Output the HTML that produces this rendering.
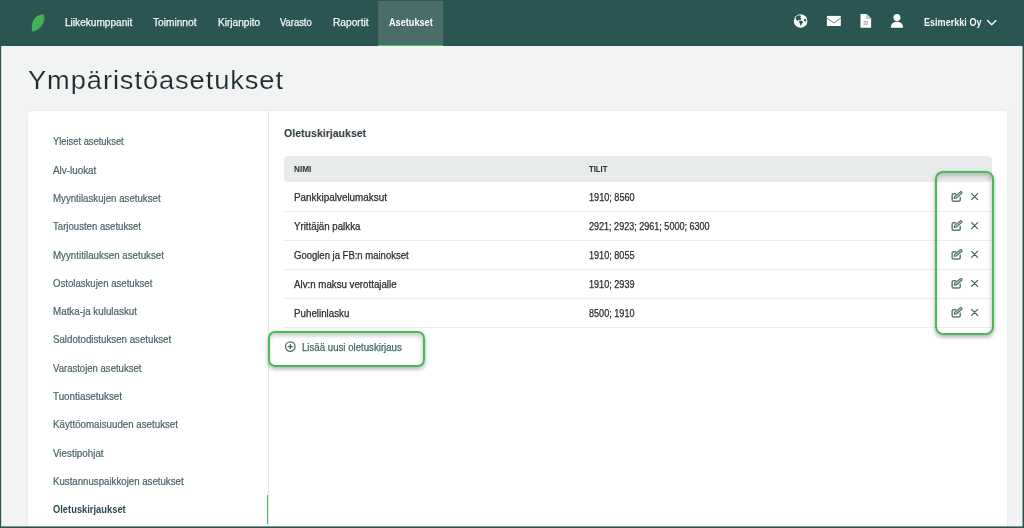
<!DOCTYPE html>
<html><head><meta charset="utf-8">
<style>
html,body{margin:0;padding:0;}
body{width:1024px;height:528px;overflow:hidden;position:relative;background:#f2f4f4;font-family:"Liberation Sans",sans-serif;}
.t{position:absolute;white-space:nowrap;font-family:"Liberation Sans",sans-serif;}
.a{position:absolute;}
</style></head><body>
<!-- nav -->
<div class="a" style="left:0;top:0;width:1024px;height:46px;background:#2a5553"></div>
<div class="a" style="left:378px;top:1px;width:65px;height:44px;background:#4a6d6a"></div>
<div class="a" style="left:378px;top:44.5px;width:65px;height:1.7px;background:#46c35a"></div>
<svg class="a" style="left:0;top:0" width="1024" height="46" viewBox="0 0 1024 46">
  <defs><filter id="bl" x="-50%" y="-50%" width="200%" height="200%"><feGaussianBlur stdDeviation="0.6"/></filter></defs>
  <path d="M33.6,32.1 C32.6,25 35.2,16.5 44.4,14.3 C45.9,20.5 43.4,28.5 33.6,32.1 Z" fill="#6b8081" opacity="0.75" filter="url(#bl)"/>
  <path d="M32.2,31.7 C30.6,23.5 33,15.6 43,13.9 C45.2,20 42.2,28.3 32.2,31.7 Z" fill="#41b553"/>
  <!-- globe -->
  <circle cx="800.6" cy="21" r="6.85" fill="#ffffff"/>
  <path d="M795.6,17.4 C796.6,15.6 798.6,14.9 800.2,15.2 L801.2,16.6 L800,17.5 L801.5,18.6 L800.2,20.6 L798.8,19.8 L797.5,20.9 L796,19.6 Z" fill="#2a5553"/>
  <path d="M798.8,20.9 L801.6,20.8 L803.2,22 L801.9,23.8 L800.6,26.2 L800.1,24.3 Z" fill="#2a5553"/>
  <path d="M804.3,18.4 L806,19.2 L806.5,21.4 L805,21.6 L804,20.2 Z" fill="#2a5553"/>
  <!-- envelope -->
  <rect x="826.9" y="15.9" width="13.9" height="10.1" fill="#ffffff"/>
  <path d="M826.9,18.2 L833.85,22.9 L840.8,18.2" fill="none" stroke="#4d6e6c" stroke-width="0.9"/>
  <!-- doc -->
  <path d="M860.5,14.1 H866.7 L871.1,18.5 V27.8 H860.5 Z" fill="#ffffff"/>
  <path d="M866.7,14.1 V18.5 H871.1" fill="#cfd8d8" stroke="#8aa0a0" stroke-width="0.5"/>
  <rect x="863.5" y="21.2" width="4.6" height="1.1" fill="#8e9f9f"/>
  <rect x="863.5" y="23.5" width="4.6" height="1.1" fill="#8e9f9f"/>
  <!-- user -->
  <circle cx="896.9" cy="17.5" r="3.5" fill="#ffffff"/>
  <path d="M890.8,27.8 C890.8,24 893,21.8 896.9,21.8 C900.8,21.8 903.1,24 903.1,27.8 Z" fill="#ffffff"/>
  <!-- chevron -->
  <path d="M987.5,20.5 L991.7,24.7 L995.9,20.5" fill="none" stroke="#ffffff" stroke-width="1.3" stroke-linecap="round" stroke-linejoin="round"/>
</svg>

<!-- card -->
<div class="a" style="left:28px;top:110.8px;width:979px;height:430px;background:#ffffff;border-radius:3px;box-shadow:0 0 4px rgba(0,0,0,0.06)"></div>
<div class="a" style="left:268px;top:110.8px;width:1px;height:420px;background:#e3e7e7"></div>
<div class="a" style="left:266.8px;top:495px;width:1.6px;height:28.5px;background:#48be58"></div>

<!-- table header -->
<div class="a" style="left:284px;top:156px;width:707.5px;height:25.8px;background:#e8ebeb;border-radius:4px"></div>
<!-- row dividers -->
<div class="a" style="left:284px;top:210.8px;width:707.5px;height:1px;background:#eceeee"></div>
<div class="a" style="left:284px;top:240px;width:707.5px;height:1px;background:#eceeee"></div>
<div class="a" style="left:284px;top:268.8px;width:707.5px;height:1px;background:#eceeee"></div>
<div class="a" style="left:284px;top:297.8px;width:707.5px;height:1px;background:#eceeee"></div>
<div class="a" style="left:284px;top:327px;width:707.5px;height:1px;background:#eceeee"></div>

<!-- icons in rows -->
<svg class="a" style="left:0;top:0" width="1024" height="528" viewBox="0 0 1024 528">
  <g transform="translate(951,191.2)"><path d="M4.6,2.65 H2.6 Q1.15,2.65 1.15,4.1 V8.6 Q1.15,10.05 2.6,10.05 H7.8 Q9.25,10.05 9.25,8.6 V6.2" fill="none" stroke="#5c7d7b" stroke-width="1.5" stroke-linecap="round"/>
      <path d="M3.1,7.3 L3.7,5.1 L9.4,0.6 Q10.1,0.15 10.7,0.85 L10.95,1.15 Q11.3,1.75 10.8,2.25 L5.3,7.0 Z" fill="#b3c4c3" stroke="#4d6e6c" stroke-width="1.05" stroke-linejoin="round"/></g>
  <g transform="translate(971.1,193.1)"><path d="M0.5,0.5 L6.5,6.5 M6.5,0.5 L0.5,6.5" fill="none" stroke="#3d6361" stroke-width="1.2" stroke-linecap="round"/></g>
  <g transform="translate(951,220.2)"><path d="M4.6,2.65 H2.6 Q1.15,2.65 1.15,4.1 V8.6 Q1.15,10.05 2.6,10.05 H7.8 Q9.25,10.05 9.25,8.6 V6.2" fill="none" stroke="#5c7d7b" stroke-width="1.5" stroke-linecap="round"/>
      <path d="M3.1,7.3 L3.7,5.1 L9.4,0.6 Q10.1,0.15 10.7,0.85 L10.95,1.15 Q11.3,1.75 10.8,2.25 L5.3,7.0 Z" fill="#b3c4c3" stroke="#4d6e6c" stroke-width="1.05" stroke-linejoin="round"/></g>
  <g transform="translate(971.1,222.1)"><path d="M0.5,0.5 L6.5,6.5 M6.5,0.5 L0.5,6.5" fill="none" stroke="#3d6361" stroke-width="1.2" stroke-linecap="round"/></g>
  <g transform="translate(951,249)"><path d="M4.6,2.65 H2.6 Q1.15,2.65 1.15,4.1 V8.6 Q1.15,10.05 2.6,10.05 H7.8 Q9.25,10.05 9.25,8.6 V6.2" fill="none" stroke="#5c7d7b" stroke-width="1.5" stroke-linecap="round"/>
      <path d="M3.1,7.3 L3.7,5.1 L9.4,0.6 Q10.1,0.15 10.7,0.85 L10.95,1.15 Q11.3,1.75 10.8,2.25 L5.3,7.0 Z" fill="#b3c4c3" stroke="#4d6e6c" stroke-width="1.05" stroke-linejoin="round"/></g>
  <g transform="translate(971.1,250.9)"><path d="M0.5,0.5 L6.5,6.5 M6.5,0.5 L0.5,6.5" fill="none" stroke="#3d6361" stroke-width="1.2" stroke-linecap="round"/></g>
  <g transform="translate(951,278)"><path d="M4.6,2.65 H2.6 Q1.15,2.65 1.15,4.1 V8.6 Q1.15,10.05 2.6,10.05 H7.8 Q9.25,10.05 9.25,8.6 V6.2" fill="none" stroke="#5c7d7b" stroke-width="1.5" stroke-linecap="round"/>
      <path d="M3.1,7.3 L3.7,5.1 L9.4,0.6 Q10.1,0.15 10.7,0.85 L10.95,1.15 Q11.3,1.75 10.8,2.25 L5.3,7.0 Z" fill="#b3c4c3" stroke="#4d6e6c" stroke-width="1.05" stroke-linejoin="round"/></g>
  <g transform="translate(971.1,279.9)"><path d="M0.5,0.5 L6.5,6.5 M6.5,0.5 L0.5,6.5" fill="none" stroke="#3d6361" stroke-width="1.2" stroke-linecap="round"/></g>
  <g transform="translate(951,307)"><path d="M4.6,2.65 H2.6 Q1.15,2.65 1.15,4.1 V8.6 Q1.15,10.05 2.6,10.05 H7.8 Q9.25,10.05 9.25,8.6 V6.2" fill="none" stroke="#5c7d7b" stroke-width="1.5" stroke-linecap="round"/>
      <path d="M3.1,7.3 L3.7,5.1 L9.4,0.6 Q10.1,0.15 10.7,0.85 L10.95,1.15 Q11.3,1.75 10.8,2.25 L5.3,7.0 Z" fill="#b3c4c3" stroke="#4d6e6c" stroke-width="1.05" stroke-linejoin="round"/></g>
  <g transform="translate(971.1,308.9)"><path d="M0.5,0.5 L6.5,6.5 M6.5,0.5 L0.5,6.5" fill="none" stroke="#3d6361" stroke-width="1.2" stroke-linecap="round"/></g>
  <!-- plus circle -->
  <circle cx="290.3" cy="346.6" r="4.75" fill="none" stroke="#4d6e6c" stroke-width="1.3"/>
  <path d="M290.3,344.6 V348.6 M288.3,346.6 H292.3" stroke="#3f6260" stroke-width="1.3" stroke-linecap="round"/>
</svg>

<!-- green highlight boxes -->
<div class="a" style="left:935.2px;top:171.2px;width:58.7px;height:163.5px;box-sizing:border-box;border:2px solid #47b955;border-radius:8px;box-shadow:0 2px 4px rgba(0,0,0,0.32), inset -1px 3px 4px rgba(0,0,0,0.2)"></div>
<div class="a" style="left:268.1px;top:331.4px;width:156.9px;height:35.4px;box-sizing:border-box;border:2px solid #47b955;border-radius:7px;box-shadow:0 2px 4px rgba(0,0,0,0.32), inset -1px 3px 4px rgba(0,0,0,0.2)"></div>

<div class="t" style="left:64.5px;top:18.43px;font-size:10px;line-height:10px;font-weight:400;color:#f4f7f6;letter-spacing:0.000px;-webkit-text-stroke:0.25px #f4f7f6;transform:scaleX(1.0102107728337237);transform-origin:0 0;">Liikekumppanit</div>
<div class="t" style="left:152.8px;top:18.43px;font-size:10px;line-height:10px;font-weight:400;color:#f4f7f6;letter-spacing:0.000px;-webkit-text-stroke:0.25px #f4f7f6;transform:scaleX(1.0160583941605839);transform-origin:0 0;">Toiminnot</div>
<div class="t" style="left:217.6px;top:18.43px;font-size:10px;line-height:10px;font-weight:400;color:#f4f7f6;letter-spacing:0.000px;-webkit-text-stroke:0.25px #f4f7f6;transform:scaleX(1.0119145747470963);transform-origin:0 0;">Kirjanpito</div>
<div class="t" style="left:280.3px;top:18.43px;font-size:10px;line-height:10px;font-weight:400;color:#f4f7f6;letter-spacing:0.000px;-webkit-text-stroke:0.25px #f4f7f6;transform:scaleX(0.9396943029180176);transform-origin:0 0;">Varasto</div>
<div class="t" style="left:333.0px;top:18.43px;font-size:10px;line-height:10px;font-weight:400;color:#f4f7f6;letter-spacing:0.000px;-webkit-text-stroke:0.25px #f4f7f6;transform:scaleX(1.0166889781347612);transform-origin:0 0;">Raportit</div>
<div class="t" style="left:388.9px;top:18.43px;font-size:10px;line-height:10px;font-weight:700;color:#ffffff;letter-spacing:0.000px;transform:scaleX(0.9139869281045753);transform-origin:0 0;">Asetukset</div>
<div class="t" style="left:923.5px;top:18.43px;font-size:10px;line-height:10px;font-weight:700;color:#f4f7f6;letter-spacing:0.000px;transform:scaleX(0.9072978303747534);transform-origin:0 0;">Esimerkki Oy</div>
<div class="t" style="left:28.0px;top:67.64px;font-size:25px;line-height:25px;font-weight:400;color:#1d2a30;letter-spacing:0.847px;-webkit-text-stroke:0.15px #f2f4f4;transform:scaleX(1.09);transform-origin:0 0;">Ympäristöasetukset</div>
<div class="t" style="left:53.1px;top:137.23px;font-size:10px;line-height:10px;font-weight:400;color:#4a6469;letter-spacing:0.000px;-webkit-text-stroke:0.2px #4a6469;transform:scaleX(0.9350692291795826);transform-origin:0 0;">Yleiset asetukset</div>
<div class="t" style="left:53.1px;top:165.55px;font-size:10px;line-height:10px;font-weight:400;color:#4a6469;letter-spacing:0.000px;-webkit-text-stroke:0.2px #4a6469;transform:scaleX(0.9861921708185053);transform-origin:0 0;">Alv-luokat</div>
<div class="t" style="left:53.1px;top:193.87px;font-size:10px;line-height:10px;font-weight:400;color:#4a6469;letter-spacing:0.000px;-webkit-text-stroke:0.2px #4a6469;transform:scaleX(0.9678706957132818);transform-origin:0 0;">Myyntilaskujen asetukset</div>
<div class="t" style="left:53.1px;top:222.19px;font-size:10px;line-height:10px;font-weight:400;color:#4a6469;letter-spacing:0.000px;-webkit-text-stroke:0.2px #4a6469;transform:scaleX(0.9594548551959114);transform-origin:0 0;">Tarjousten asetukset</div>
<div class="t" style="left:53.1px;top:250.52px;font-size:10px;line-height:10px;font-weight:400;color:#4a6469;letter-spacing:0.000px;-webkit-text-stroke:0.2px #4a6469;transform:scaleX(0.9740847387906212);transform-origin:0 0;">Myyntitilauksen asetukset</div>
<div class="t" style="left:53.1px;top:278.83px;font-size:10px;line-height:10px;font-weight:400;color:#4a6469;letter-spacing:0.000px;-webkit-text-stroke:0.2px #4a6469;transform:scaleX(0.96043524255705);transform-origin:0 0;">Ostolaskujen asetukset</div>
<div class="t" style="left:53.1px;top:307.16px;font-size:10px;line-height:10px;font-weight:400;color:#4a6469;letter-spacing:0.000px;-webkit-text-stroke:0.2px #4a6469;transform:scaleX(0.9813800657174151);transform-origin:0 0;">Matka-ja kululaskut</div>
<div class="t" style="left:53.1px;top:335.48px;font-size:10px;line-height:10px;font-weight:400;color:#4a6469;letter-spacing:0.000px;-webkit-text-stroke:0.2px #4a6469;transform:scaleX(0.9708418891170432);transform-origin:0 0;">Saldotodistuksen asetukset</div>
<div class="t" style="left:53.1px;top:363.80px;font-size:10px;line-height:10px;font-weight:400;color:#4a6469;letter-spacing:0.000px;-webkit-text-stroke:0.2px #4a6469;transform:scaleX(0.9540640809443508);transform-origin:0 0;">Varastojen asetukset</div>
<div class="t" style="left:53.1px;top:392.12px;font-size:10px;line-height:10px;font-weight:400;color:#4a6469;letter-spacing:0.000px;-webkit-text-stroke:0.2px #4a6469;transform:scaleX(0.9824249165739711);transform-origin:0 0;">Tuontiasetukset</div>
<div class="t" style="left:53.1px;top:420.44px;font-size:10px;line-height:10px;font-weight:400;color:#4a6469;letter-spacing:0.000px;-webkit-text-stroke:0.2px #4a6469;transform:scaleX(0.9733544226791581);transform-origin:0 0;">Käyttöomaisuuden asetukset</div>
<div class="t" style="left:53.1px;top:448.75px;font-size:10px;line-height:10px;font-weight:400;color:#4a6469;letter-spacing:0.000px;-webkit-text-stroke:0.2px #4a6469;transform:scaleX(0.9819284414796847);transform-origin:0 0;">Viestipohjat</div>
<div class="t" style="left:53.1px;top:477.08px;font-size:10px;line-height:10px;font-weight:400;color:#4a6469;letter-spacing:0.000px;-webkit-text-stroke:0.2px #4a6469;transform:scaleX(0.966736062919269);transform-origin:0 0;">Kustannuspaikkojen asetukset</div>
<div class="t" style="left:53.1px;top:505.40px;font-size:10px;line-height:10px;font-weight:700;color:#2b4a4d;letter-spacing:0.000px;transform:scaleX(0.9342971887550201);transform-origin:0 0;">Oletuskirjaukset</div>
<div class="t" style="left:284.1px;top:128.11px;font-size:10.5px;line-height:10.5px;font-weight:700;color:#2f3b3d;letter-spacing:0.020px;">Oletuskirjaukset</div>
<div class="t" style="left:294.2px;top:164.68px;font-size:9px;line-height:9px;font-weight:700;color:#2b2f31;letter-spacing:0.000px;transform:scaleX(0.9105263157894737);transform-origin:0 0;">NIMI</div>
<div class="t" style="left:588.9px;top:164.68px;font-size:9px;line-height:9px;font-weight:700;color:#2b2f31;letter-spacing:0.000px;transform:scaleX(0.8558139534883721);transform-origin:0 0;">TILIT</div>
<div class="t" style="left:294.4px;top:193.34px;font-size:10px;line-height:10px;font-weight:400;color:#2a2e30;letter-spacing:0.000px;-webkit-text-stroke:0.25px #2a2e30;transform:scaleX(0.9900199600798403);transform-origin:0 0;">Pankkipalvelumaksut</div>
<div class="t" style="left:588.5px;top:193.34px;font-size:10px;line-height:10px;font-weight:400;color:#2a2e30;letter-spacing:0.000px;-webkit-text-stroke:0.25px #2a2e30;transform:scaleX(0.9108614232209739);transform-origin:0 0;">1910; 8560</div>
<div class="t" style="left:294.4px;top:222.34px;font-size:10px;line-height:10px;font-weight:400;color:#2a2e30;letter-spacing:0.000px;-webkit-text-stroke:0.25px #2a2e30;transform:scaleX(0.9711151736745888);transform-origin:0 0;">Yrittäjän palkka</div>
<div class="t" style="left:588.5px;top:222.34px;font-size:10px;line-height:10px;font-weight:400;color:#2a2e30;letter-spacing:0.000px;-webkit-text-stroke:0.25px #2a2e30;transform:scaleX(0.9035822992273472);transform-origin:0 0;">2921; 2923; 2961; 5000; 6300</div>
<div class="t" style="left:294.4px;top:251.14px;font-size:10px;line-height:10px;font-weight:400;color:#2a2e30;letter-spacing:0.000px;-webkit-text-stroke:0.25px #2a2e30;transform:scaleX(0.9500518134715026);transform-origin:0 0;">Googlen ja FB:n mainokset</div>
<div class="t" style="left:588.5px;top:251.14px;font-size:10px;line-height:10px;font-weight:400;color:#2a2e30;letter-spacing:0.000px;-webkit-text-stroke:0.25px #2a2e30;transform:scaleX(0.9088639200998752);transform-origin:0 0;">1910; 8055</div>
<div class="t" style="left:294.4px;top:279.94px;font-size:10px;line-height:10px;font-weight:400;color:#2a2e30;letter-spacing:0.000px;-webkit-text-stroke:0.25px #2a2e30;transform:scaleX(0.9715046604527297);transform-origin:0 0;">Alv:n maksu verottajalle</div>
<div class="t" style="left:588.5px;top:279.94px;font-size:10px;line-height:10px;font-weight:400;color:#2a2e30;letter-spacing:0.000px;-webkit-text-stroke:0.25px #2a2e30;transform:scaleX(0.9088639200998752);transform-origin:0 0;">1910; 2939</div>
<div class="t" style="left:294.4px;top:308.74px;font-size:10px;line-height:10px;font-weight:400;color:#2a2e30;letter-spacing:0.000px;-webkit-text-stroke:0.25px #2a2e30;transform:scaleX(0.9767493112947658);transform-origin:0 0;">Puhelinlasku</div>
<div class="t" style="left:588.5px;top:308.74px;font-size:10px;line-height:10px;font-weight:400;color:#2a2e30;letter-spacing:0.000px;-webkit-text-stroke:0.25px #2a2e30;transform:scaleX(0.9088639200998752);transform-origin:0 0;">8500; 1910</div>
<div class="t" style="left:302.2px;top:343.34px;font-size:10px;line-height:10px;font-weight:400;color:#426866;letter-spacing:0.000px;-webkit-text-stroke:0.25px #426866;transform:scaleX(0.9652712709687169);transform-origin:0 0;">Lisää uusi oletuskirjaus</div>

<!-- frame -->
<svg class="a" style="left:0;top:0" width="1024" height="528" viewBox="0 0 1024 528">
  <rect x="0" y="0" width="1.2" height="528" fill="#2a5553"/>
  <rect x="1022.5" y="0" width="1.5" height="528" fill="#2a5553"/>
  <rect x="0" y="526.4" width="1024" height="1.6" fill="#2a5553"/>
</svg>
</body></html>
